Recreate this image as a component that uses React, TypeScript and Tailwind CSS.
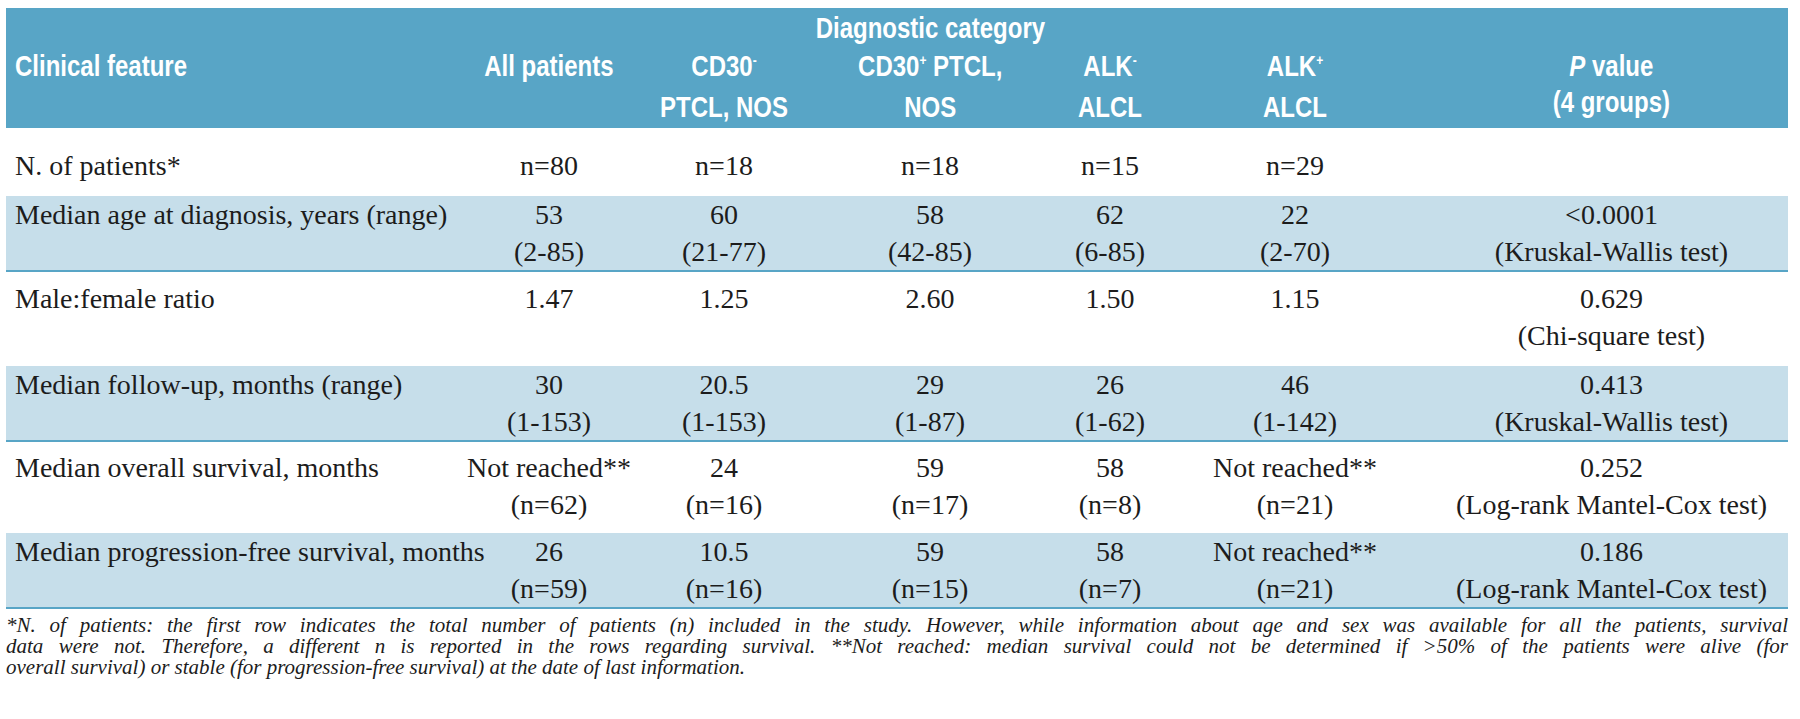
const head = "font-['Liberation_Sans',sans-serif] font-bold text-white"
const body = "font-['Liberation_Serif',serif] text-[#1c1c1c]"
const cols = "grid grid-cols-[457px_172px_178px_234px_126px_244px_371px]"

type Row = { label: string; cells: string[][]; shade?: boolean; pad: string }

const rows: Row[] = [
  {
    label: "N. of patients*",
    cells: [["n=80"], ["n=18"], ["n=18"], ["n=15"], ["n=29"], []],
    pad: "pt-[19px] pb-[12px]",
  },
  {
    label: "Median age at diagnosis, years (range)",
    cells: [["53", "(2-85)"], ["60", "(21-77)"], ["58", "(42-85)"], ["62", "(6-85)"], ["22", "(2-70)"], ["<0.0001", "(Kruskal-Wallis test)"]],
    shade: true,
    pad: "pt-0 pb-0",
  },
  {
    label: "Male:female ratio",
    cells: [["1.47"], ["1.25"], ["2.60"], ["1.50"], ["1.15"], ["0.629", "(Chi-square test)"]],
    pad: "pt-[8px] pb-[12px]",
  },
  {
    label: "Median follow-up, months (range)",
    cells: [["30", "(1-153)"], ["20.5", "(1-153)"], ["29", "(1-87)"], ["26", "(1-62)"], ["46", "(1-142)"], ["0.413", "(Kruskal-Wallis test)"]],
    shade: true,
    pad: "pt-0 pb-0",
  },
  {
    label: "Median overall survival, months",
    cells: [["Not reached**", "(n=62)"], ["24", "(n=16)"], ["59", "(n=17)"], ["58", "(n=8)"], ["Not reached**", "(n=21)"], ["0.252", "(Log-rank Mantel-Cox test)"]],
    pad: "pt-[7px] pb-[10px]",
  },
  {
    label: "Median progression-free survival, months",
    cells: [["26", "(n=59)"], ["10.5", "(n=16)"], ["59", "(n=15)"], ["58", "(n=7)"], ["Not reached**", "(n=21)"], ["0.186", "(Log-rank Mantel-Cox test)"]],
    shade: true,
    pad: "pt-0 pb-0",
  },
]

function Sup({ children }: { children: string }) {
  return <span className="relative -top-[11px] text-[15px]">{children}</span>
}

// condensed look for the header face
function Narrow({ children, left }: { children: React.ReactNode; left?: boolean }) {
  return (
    <span className={`inline-block scale-x-[0.8] whitespace-nowrap ${left ? "origin-left" : "origin-center"}`}>
      {children}
    </span>
  )
}

export default function App() {
  return (
    <div className="min-h-screen bg-white pt-[8px] pl-[6px]">
      <div className="w-[1782px]">
        {/* header */}
        <div className={`${cols} ${head} bg-[#58a5c6] pt-[2px] pb-[3px] text-[30px] leading-[36px]`}>
          <div className="col-start-4 flex h-[38px] justify-center overflow-visible whitespace-nowrap">
            <Narrow>Diagnostic category</Narrow>
          </div>
          <div className="col-start-1 row-start-2 pl-[9px]">
            <Narrow left>Clinical feature</Narrow>
          </div>
          <div className="row-start-2 text-center">
            <Narrow>All patients</Narrow>
          </div>
          <div className="row-start-2 text-center">
            <Narrow>
              CD30<Sup>-</Sup>
              <br />
              PTCL, NOS
            </Narrow>
          </div>
          <div className="row-start-2 text-center">
            <Narrow>
              CD30<Sup>+</Sup> PTCL,
              <br />
              NOS
            </Narrow>
          </div>
          <div className="row-start-2 text-center">
            <Narrow>
              ALK<Sup>-</Sup>
              <br />
              ALCL
            </Narrow>
          </div>
          <div className="row-start-2 text-center">
            <Narrow>
              ALK<Sup>+</Sup>
              <br />
              ALCL
            </Narrow>
          </div>
          <div className="row-start-2 pl-[18px] text-center">
            <Narrow>
              <i>P</i> value
              <br />
              (4 groups)
            </Narrow>
          </div>
        </div>

        {/* body */}
        {rows.map((r) => (
          <div
            key={r.label}
            className={`${cols} ${body} ${r.pad} text-[28px] leading-[37px] ${
              r.shade ? "border-b-2 border-[#58a5c6] bg-[#c6deea]" : ""
            }`}
          >
            <div className="whitespace-nowrap pl-[9px]">{r.label}</div>
            {r.cells.map((c, i) => (
              <div key={i} className={`whitespace-nowrap text-center ${i === 5 ? "pl-[18px]" : ""}`}>
                {c.map((t) => (
                  <div key={t}>{t}</div>
                ))}
              </div>
            ))}
          </div>
        ))}

        {/* footnote */}
        <div className="pt-[6px] font-['Liberation_Serif',serif] text-[21px] italic leading-[21px] text-[#1c1c1c]">
          <p className="text-justify [text-align-last:justify]">
            *N. of patients: the first row indicates the total number of patients (n) included in the study. However, while information about age and sex was available for all the patients, survival
          </p>
          <p className="text-justify [text-align-last:justify]">
            data were not. Therefore, a different n is reported in the rows regarding survival. **Not reached: median survival could not be determined if &gt;50% of the patients were alive (for
          </p>
          <p>overall survival) or stable (for progression-free survival) at the date of last information.</p>
        </div>
      </div>
    </div>
  )
}
